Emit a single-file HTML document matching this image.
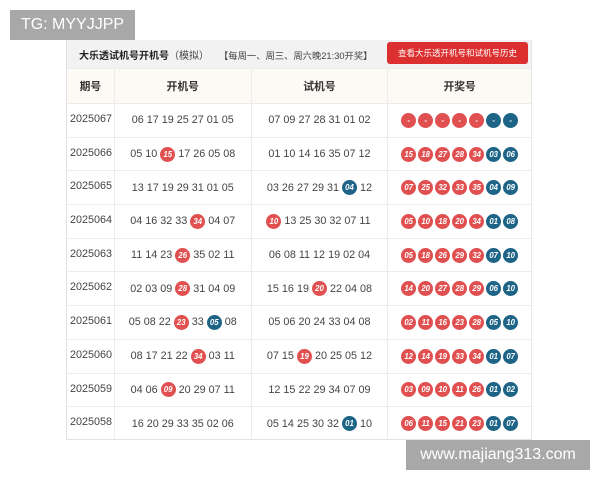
<!DOCTYPE html>
<html><head><meta charset="utf-8"><style>
*{margin:0;padding:0;box-sizing:border-box}
body{width:600px;height:480px;background:#fff;position:relative;overflow:hidden;font-family:"Liberation Sans","Noto Sans CJK SC",sans-serif;color:#444}
.wm{position:absolute;background:#a8a8a8;color:#fff;font-size:16px;display:flex;align-items:center;justify-content:center}
.tbl{position:absolute;left:66px;top:40px;width:466px;height:400px;border-left:1px solid #e2e2e2;border-right:1px solid #e8e8e8;border-bottom:1px solid #e2e2e2}
.bar{height:28px;background:#f2f2f2;position:relative;font-size:10px}
.bar .t{position:absolute;left:12px;top:7px;font-weight:bold;color:#222}
.bar .t span{font-weight:normal;color:#444}
.bar .s{position:absolute;left:152px;top:8px;color:#444;font-size:9.3px}
.btn{position:absolute;left:320px;top:2px;width:141px;height:22px;background:#dc2f2f;border-radius:3px;color:#fff;font-size:8.5px;display:flex;align-items:center;justify-content:center}
.row{display:flex;height:33.7px;border-top:1px solid #ececec}
.hd{height:35px;background:#fdf9f4;font-weight:bold;font-size:10.5px;color:#333}
.c{display:flex;align-items:center;justify-content:center;border-right:1px solid #ececec;gap:5px;font-size:10.8px}
.c1{width:48px;justify-content:flex-start;padding-left:3px;align-items:flex-start;padding-top:9px}
.hd .c1{justify-content:center;padding:0;align-items:center}
.c2,.c3{width:137px}
.c4{width:143px;border-right:none;gap:2px}
.b{display:inline-flex;width:15px;height:15px;border-radius:50%;color:#fff;font-size:7.8px;font-weight:bold;align-items:center;justify-content:center;margin:0 -2px}
.c4 .b{margin:0}
.r{background:#e05050}.u{background:#1d6487}
</style></head><body>
<div class="wm" style="left:10px;top:10px;width:125px;height:30px">TG: MYYJJPP</div>
<div class="tbl">
<div class="bar"><div class="t">大乐透试机号开机号<span>（模拟）</span></div><div class="s">【每周一、周三、周六晚21:30开奖】</div><div class="btn">查看大乐透开机号和试机号历史</div></div>
<div class="row hd"><div class="c c1">期号</div><div class="c c2">开机号</div><div class="c c3">试机号</div><div class="c c4">开奖号</div></div>
<div class="row"><div class="c c1">2025067</div><div class="c c2">06 17 19 25 27 01 05</div><div class="c c3">07 09 27 28 31 01 02</div><div class="c c4"><i class="b r">-</i><i class="b r">-</i><i class="b r">-</i><i class="b r">-</i><i class="b r">-</i><i class="b u">-</i><i class="b u">-</i></div></div>
<div class="row"><div class="c c1">2025066</div><div class="c c2">05 10 <i class="b r">15</i> 17 26 05 08</div><div class="c c3">01 10 14 16 35 07 12</div><div class="c c4"><i class="b r">15</i><i class="b r">18</i><i class="b r">27</i><i class="b r">28</i><i class="b r">34</i><i class="b u">03</i><i class="b u">06</i></div></div>
<div class="row"><div class="c c1">2025065</div><div class="c c2">13 17 19 29 31 01 05</div><div class="c c3">03 26 27 29 31 <i class="b u">04</i> 12</div><div class="c c4"><i class="b r">07</i><i class="b r">25</i><i class="b r">32</i><i class="b r">33</i><i class="b r">35</i><i class="b u">04</i><i class="b u">09</i></div></div>
<div class="row"><div class="c c1">2025064</div><div class="c c2">04 16 32 33 <i class="b r">34</i> 04 07</div><div class="c c3"><i class="b r">10</i> 13 25 30 32 07 11</div><div class="c c4"><i class="b r">05</i><i class="b r">10</i><i class="b r">18</i><i class="b r">20</i><i class="b r">34</i><i class="b u">01</i><i class="b u">08</i></div></div>
<div class="row"><div class="c c1">2025063</div><div class="c c2">11 14 23 <i class="b r">26</i> 35 02 11</div><div class="c c3">06 08 11 12 19 02 04</div><div class="c c4"><i class="b r">05</i><i class="b r">18</i><i class="b r">26</i><i class="b r">29</i><i class="b r">32</i><i class="b u">07</i><i class="b u">10</i></div></div>
<div class="row"><div class="c c1">2025062</div><div class="c c2">02 03 09 <i class="b r">28</i> 31 04 09</div><div class="c c3">15 16 19 <i class="b r">20</i> 22 04 08</div><div class="c c4"><i class="b r">14</i><i class="b r">20</i><i class="b r">27</i><i class="b r">28</i><i class="b r">29</i><i class="b u">06</i><i class="b u">10</i></div></div>
<div class="row"><div class="c c1">2025061</div><div class="c c2">05 08 22 <i class="b r">23</i> 33 <i class="b u">05</i> 08</div><div class="c c3">05 06 20 24 33 04 08</div><div class="c c4"><i class="b r">02</i><i class="b r">11</i><i class="b r">16</i><i class="b r">23</i><i class="b r">28</i><i class="b u">05</i><i class="b u">10</i></div></div>
<div class="row"><div class="c c1">2025060</div><div class="c c2">08 17 21 22 <i class="b r">34</i> 03 11</div><div class="c c3">07 15 <i class="b r">19</i> 20 25 05 12</div><div class="c c4"><i class="b r">12</i><i class="b r">14</i><i class="b r">19</i><i class="b r">33</i><i class="b r">34</i><i class="b u">01</i><i class="b u">07</i></div></div>
<div class="row"><div class="c c1">2025059</div><div class="c c2">04 06 <i class="b r">09</i> 20 29 07 11</div><div class="c c3">12 15 22 29 34 07 09</div><div class="c c4"><i class="b r">03</i><i class="b r">09</i><i class="b r">10</i><i class="b r">11</i><i class="b r">26</i><i class="b u">01</i><i class="b u">02</i></div></div>
<div class="row"><div class="c c1">2025058</div><div class="c c2">16 20 29 33 35 02 06</div><div class="c c3">05 14 25 30 32 <i class="b u">01</i> 10</div><div class="c c4"><i class="b r">06</i><i class="b r">11</i><i class="b r">15</i><i class="b r">21</i><i class="b r">23</i><i class="b u">01</i><i class="b u">07</i></div></div>
</div>
<div class="wm" style="left:406px;top:440px;width:184px;height:30px">www.majiang313.com</div>
</body></html>
